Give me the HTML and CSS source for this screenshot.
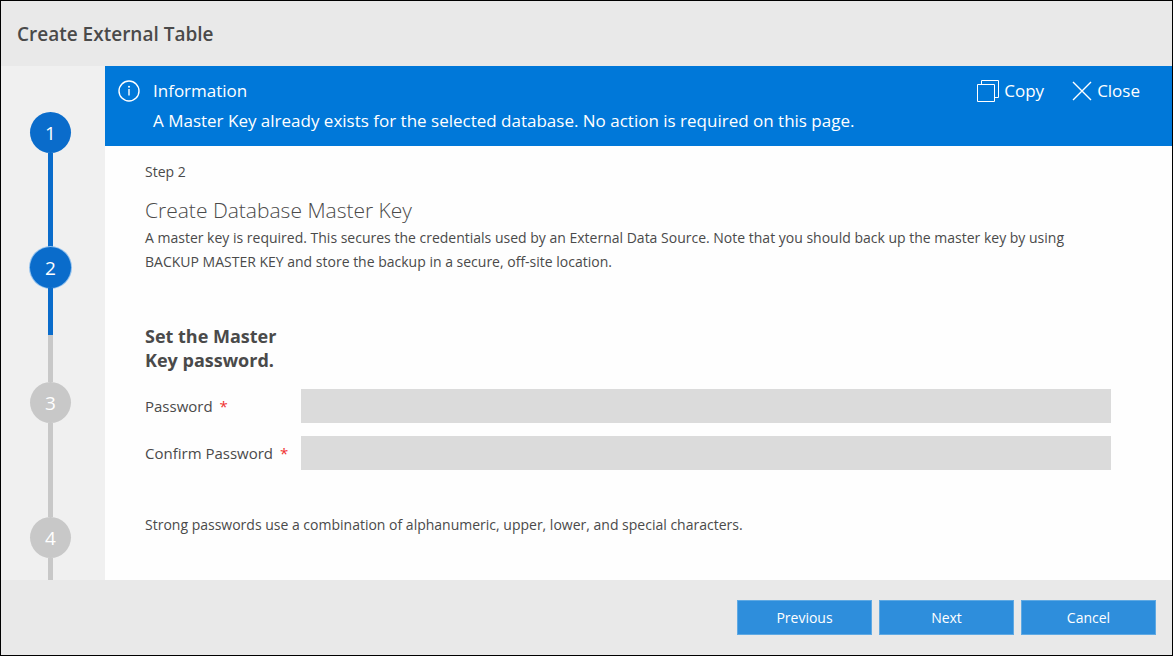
FILE: index.html
```html
<!DOCTYPE html>
<html lang="en">
<head>
<meta charset="utf-8">
<meta name="viewport" content="width=device-width, initial-scale=1">
<title>Create External Table</title>
<link rel="stylesheet" href="styles.css">
</head>
<body>
<div class="wizard">
  <header class="wizard-header">
    <h1 class="wizard-title">Create External Table</h1>
  </header>
  <div class="wizard-body">
    <ol class="steps">
      <li class="step done"><span class="step-number">1</span></li>
      <li class="step current" aria-current="step"><span class="step-number">2</span></li>
      <li class="step"><span class="step-number">3</span></li>
      <li class="step last"><span class="step-number">4</span></li>
    </ol>
    <main class="page">
      <section class="banner">
        <svg class="info-icon" viewBox="0 0 22 22" aria-hidden="true">
          <circle cx="11" cy="11" r="10" fill="none" stroke="currentColor" stroke-width="1.4"/>
          <path d="M11 9V15.500" stroke="currentColor" stroke-width="1.4"/>
          <circle cx="11" cy="6.7" r="1" fill="currentColor"/>
        </svg>
        <div class="banner-text">
          <h2 class="banner-title">Information</h2>
          <p class="banner-message">A Master Key already exists for the selected database. No action is required on this page.</p>
        </div>
        <div class="banner-actions">
          <button type="button" class="banner-button">
            <svg class="copy-icon" viewBox="0 0 22 22" aria-hidden="true">
              <path d="M.5 4.5H17.500V21.500H.5ZM4.500 4.500V.5H21.500V17.500H17.500" fill="none" stroke="currentColor"/>
            </svg>
            Copy
          </button>
          <button type="button" class="banner-button">
            <svg class="close-icon" viewBox="0 0 20 20" aria-hidden="true">
              <path d="M1 1L19 19M19 1L1 19" fill="none" stroke="currentColor" stroke-width="1.4"/>
            </svg>
            Close
          </button>
        </div>
      </section>
      <form class="content">
        <p class="step-label">Step 2</p>
        <h2 class="page-title">Create Database Master Key</h2>
        <p class="description">A master key is required. This secures the credentials used by an External Data Source. Note that you should back up the master key by using BACKUP MASTER KEY and store the backup in a secure, off-site location.</p>
        <h3 class="form-title">Set the Master Key password.</h3>
        <div class="fields">
          <label for="password">Password <span class="required">*</span></label>
          <input class="field" id="password" type="password" disabled>
          <label for="confirm">Confirm Password <span class="required">*</span></label>
          <input class="field" id="confirm" type="password" disabled>
        </div>
        <p class="hint">Strong passwords use a combination of alphanumeric, upper, lower, and special characters.</p>
      </form>
    </main>
  </div>
  <footer class="wizard-footer">
    <button type="button" class="action">Previous</button>
    <button type="button" class="action">Next</button>
    <button type="button" class="action">Cancel</button>
  </footer>
</div>
</body>
</html>
```
FILE: styles.css
```css
* {
  box-sizing: border-box;
}

body,
h1,
h2,
h3,
p,
ol {
  margin: 0;
  padding: 0;
}

body,
button {
  font-family: "Open Sans", "Noto Sans", sans-serif;
}

body {
  font-size: 14px;
  line-height: 24px;
  color: #4a4a4a;
}

.wizard {
  display: flex;
  flex-direction: column;
  min-height: 100vh;
  border: 1px solid #000;
  background: #e9e9e9;
}

.wizard-header {
  padding: 21px 16px 20px;
}

.wizard-title {
  font-size: 19px;
  font-weight: 600;
  line-height: 24px;
}

.wizard-body {
  display: flex;
  flex: 1;
}

.steps {
  display: flex;
  flex-direction: column;
  width: 104px;
  padding: 46px 5px 0 0;
  background: #f0f0f0;
  list-style: none;
}

.step {
  display: flex;
  flex-direction: column;
  align-items: center;
  height: 135px;
  color: #c8c8c8;
}

.step::after {
  content: "";
  flex: 1;
  width: 5px;
  background: currentColor;
}

.step.done,
.step.current {
  color: #0a6ccb;
}

.step.current::after {
  background: linear-gradient(#0a6ccb 50%, #c8c8c8 50%);
}

.step.last {
  flex: 1;
  height: auto;
}

.step-number {
  width: 41px;
  height: 41px;
  border-radius: 50%;
  background: currentColor;
  font-size: 19px;
  line-height: 42px;
  text-align: center;
}

.step-number::first-line {
  color: #fff;
}

.step.current .step-number {
  box-shadow: 0 0 0 1px #8fc0ee;
}

.page {
  flex: 1;
  min-width: 0;
  background: #fefefe;
}

.banner {
  display: flex;
  align-items: flex-start;
  padding: 10px 32px 10px 13px;
  background: #0078d9;
  color: #fff;
}

.info-icon {
  flex: none;
  width: 22px;
  height: 22px;
  margin: 4px 13px 0 0;
}

.banner-text {
  flex: 1;
  font-size: 17px;
  line-height: 30px;
}

.banner-title {
  font-size: 17px;
  font-weight: 400;
}

.banner-actions {
  display: flex;
  gap: 28px;
}

.banner-button {
  display: flex;
  align-items: center;
  gap: 5px;
  padding: 0;
  border: 0;
  background: none;
  color: inherit;
  font-size: 17px;
  line-height: 30px;
}

.copy-icon {
  width: 22px;
  height: 22px;
}

.close-icon {
  width: 20px;
  height: 20px;
}

.content {
  padding: 14px 61px 40px 40px;
}

.page-title {
  margin-top: 11px;
  font-size: 21px;
  font-weight: 300;
  line-height: 31px;
}

.form-title {
  width: 156px;
  margin-top: 50px;
  font-size: 18px;
  font-weight: 700;
  line-height: 24px;
}

.fields {
  display: grid;
  grid-template-columns: 156px 1fr;
  gap: 13px 0;
  align-items: center;
  margin-top: 17px;
  font-size: 15px;
}

.required {
  margin-left: 3px;
  color: #f03030;
}

.field {
  width: 100%;
  height: 34px;
  padding: 0 8px;
  border: 0;
  background: #dbdbdb;
  font: inherit;
}

.hint {
  margin-top: 43px;
}

.wizard-footer {
  display: flex;
  justify-content: flex-end;
  gap: 7px;
  padding: 20px 16px;
}

.action {
  width: 135px;
  height: 35px;
  border: 1px solid #5fa9e3;
  background: #2e8edc;
  color: #fff;
  font-size: 14px;
}
```
